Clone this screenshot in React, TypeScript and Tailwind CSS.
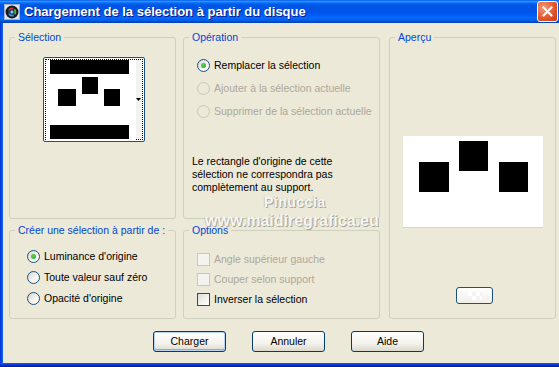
import React from "react";

const font = { fontFamily: '"Liberation Sans", Arial, sans-serif' };

function Radio({ checked = false, disabled = false }: { checked?: boolean; disabled?: boolean }) {
  return (
    <span
      className={
        disabled
          ? "w-[13px] h-[13px] rounded-full border border-[#cac8bb] bg-[#ece9d8] flex items-center justify-center shrink-0"
          : "w-[13px] h-[13px] rounded-full border border-[#1c5180] bg-[linear-gradient(135deg,#d6d4cb,#f7f6f2_60%,#ffffff)] flex items-center justify-center shrink-0"
      }
    >
      {checked && <span className="w-[5px] h-[5px] rounded-full bg-[radial-gradient(circle_at_40%_40%,#61d351,#21a121)]" />}
    </span>
  );
}

function Check({ disabled = false }: { disabled?: boolean }) {
  return (
    <span
      className={
        disabled
          ? "w-[13px] h-[13px] border border-[#cac8bb] bg-[#f4f3ee] shrink-0"
          : "w-[13px] h-[13px] border border-[#1c5180] bg-[linear-gradient(135deg,#dcdcd7,#f4f4f0_60%,#ffffff)] shrink-0"
      }
    />
  );
}

function Group({
  title,
  className,
  children,
}: {
  title: string;
  className: string;
  children?: React.ReactNode;
}) {
  return (
    <fieldset className={`border border-[#d0d0bf] rounded-[3px] m-0 p-0 min-w-0 ${className}`}>
      <legend className="ml-[5px] px-[3px] text-[10.5px] leading-[13px] text-[#0046d5]">{title}</legend>
      {children}
    </fieldset>
  );
}

function Button({ label, isDefault = false }: { label: string; isDefault?: boolean }) {
  return (
    <div
      className={
        isDefault
          ? "w-[73px] h-[21px] rounded-[3px] border border-[#003c74] bg-[linear-gradient(to_bottom,#ffffff,#f3f2ec_60%,#dcd8cc)] shadow-[inset_0_0_0_1px_#b8d2f6,inset_0_-1px_0_1px_#8aa9ee] flex items-center justify-center text-[10.5px] text-black"
          : "w-[73px] h-[21px] rounded-[3px] border border-[#003c74] bg-[linear-gradient(to_bottom,#ffffff,#f3f2ec_60%,#dcd8cc)] flex items-center justify-center text-[10.5px] text-black"
      }
    >
      {label}
    </div>
  );
}

export default function App() {
  return (
    <div className="w-[559px] h-[367px] relative overflow-hidden bg-[#ece9d8] flex flex-col" style={font}>
      {/* Title bar */}
      <div className="h-[23px] shrink-0 flex items-center bg-[linear-gradient(to_bottom,#0058ee_0%,#3593ff_6%,#127dff_10%,#0262ee_16%,#0057e5_22%,#0054e3_30%,#0055eb_56%,#005bf5_66%,#026afe_76%,#0062ef_86%,#0052d6_92%,#0040ab_100%)]">
        <svg width="16" height="16" viewBox="0 0 16 16" className="ml-[4px] mr-[4px] shrink-0">
          <rect x="0.5" y="0.5" width="15" height="15" fill="#dfe6ef" stroke="#9fb2c9" />
          <circle cx="8" cy="8" r="6.5" fill="#1a1a1a" />
          <circle cx="8" cy="8" r="4" fill="#2a3a5a" />
          <path d="M5 6 A4 4 0 0 1 9 4.5" stroke="#d33" strokeWidth="1.6" fill="none" />
          <path d="M10.5 5.5 A4 4 0 0 1 11 10" stroke="#3c3" strokeWidth="1.6" fill="none" />
          <path d="M9.5 11.5 A4 4 0 0 1 5 10" stroke="#39f" strokeWidth="1.6" fill="none" />
          <circle cx="8" cy="8" r="1.5" fill="#7cf" />
        </svg>
        <span className="text-white font-bold text-[13px] leading-[16px] whitespace-nowrap [text-shadow:1px_1px_0_#0a1883]">
          Chargement de la sélection à partir du disque
        </span>
        <div className="ml-auto mr-[1px] w-[21px] h-[21px] rounded-[3px] border border-white bg-[radial-gradient(circle_at_30%_30%,#f09a7c,#e2582f_55%,#c23a14)] flex items-center justify-center">
          <svg width="11" height="11" viewBox="0 0 11 11">
            <path d="M1.5 1.5 L9.5 9.5 M9.5 1.5 L1.5 9.5" stroke="white" strokeWidth="2" strokeLinecap="square" />
          </svg>
        </div>
      </div>

      {/* Body */}
      <div className="flex flex-1 min-h-0">
        <div className="w-[3px] shrink-0 bg-[linear-gradient(to_right,#0831d9,#0a4fe6_60%,#166aee)]" />
        <div className="flex-1 flex flex-col pl-[6px] pt-[8px] text-[10.5px] leading-[13px]">
          <div className="flex">
            {/* Left column */}
            <div className="w-[167px] flex flex-col gap-[5px]">
              <Group title="Sélection" className="h-[188px]">
                <div className="ml-[33px] mt-[13px] w-[102px] h-[85px] rounded-[2px] border border-[#1c5180] bg-white p-[1px]">
                  <div className="w-full h-full border border-dotted border-black flex">
                    <svg width="90" height="81" viewBox="0 0 90 81" className="shrink-0">
                      <rect x="0" y="0" width="90" height="81" fill="#fff" />
                      <rect x="4" y="0" width="79" height="14" fill="#000" />
                      <rect x="36" y="17" width="16" height="17" fill="#000" />
                      <rect x="12" y="29" width="18" height="17" fill="#000" />
                      <rect x="58" y="29" width="16" height="17" fill="#000" />
                      <rect x="4" y="65" width="79" height="14" fill="#000" />
                    </svg>
                    <div className="flex-1 bg-[#f2f2ee] flex items-center justify-end pr-[1px]">
                      <svg width="5" height="3" viewBox="0 0 5 3">
                        <path d="M0 0 H5 L2.5 3 Z" fill="#000" />
                      </svg>
                    </div>
                  </div>
                </div>
              </Group>
              <Group title="Créer une sélection à partir de :" className="h-[95px]">
                <div className="mt-[9px] pl-[17px] flex flex-col">
                  <div className="h-[21px] flex items-center gap-[4px] text-black">
                    <Radio checked />
                    <span>Luminance d'origine</span>
                  </div>
                  <div className="h-[21px] flex items-center gap-[4px] text-black">
                    <Radio />
                    <span>Toute valeur sauf zéro</span>
                  </div>
                  <div className="h-[21px] flex items-center gap-[4px] text-black">
                    <Radio />
                    <span>Opacité d'origine</span>
                  </div>
                </div>
              </Group>
            </div>

            {/* Middle column */}
            <div className="w-[197px] ml-[7px] flex flex-col gap-[5px]">
              <Group title="Opération" className="h-[188px]">
                <div className="mt-[10px] pl-[13px] flex flex-col">
                  <div className="h-[23px] flex items-center gap-[4px] text-black">
                    <Radio checked />
                    <span>Remplacer la sélection</span>
                  </div>
                  <div className="h-[23px] flex items-center gap-[4px] text-[#aca899]">
                    <Radio disabled />
                    <span>Ajouter à la sélection actuelle</span>
                  </div>
                  <div className="h-[23px] flex items-center gap-[4px] text-[#aca899]">
                    <Radio disabled />
                    <span>Supprimer de la sélection actuelle</span>
                  </div>
                </div>
                <p className="mt-[32px] pl-[8px] text-black leading-[13px]">
                  Le rectangle d'origine de cette
                  <br />
                  sélection ne correspondra pas
                  <br />
                  complètement au support.
                </p>
              </Group>
              <Group title="Options" className="h-[95px]">
                <div className="mt-[12px] pl-[13px] flex flex-col">
                  <div className="h-[20px] flex items-center gap-[4px] text-[#aca899]">
                    <Check disabled />
                    <span>Angle supérieur gauche</span>
                  </div>
                  <div className="h-[20px] flex items-center gap-[4px] text-[#aca899]">
                    <Check disabled />
                    <span>Couper selon support</span>
                  </div>
                  <div className="h-[20px] flex items-center gap-[4px] text-black">
                    <Check />
                    <span>Inverser la sélection</span>
                  </div>
                </div>
              </Group>
            </div>

            {/* Right column */}
            <div className="w-[167px] ml-[9px]">
              <Group title="Aperçu" className="h-[288px]">
                <div className="ml-[13px] mt-[92px] w-[140px] h-[91px] shadow-[0_1px_0_#d8d5c6]">
                  <svg width="140" height="91" viewBox="0 0 140 91">
                    <rect x="0" y="0" width="140" height="91" fill="#fff" />
                    <rect x="16" y="26" width="30" height="30" fill="#000" />
                    <rect x="56" y="5" width="29" height="30" fill="#000" />
                    <rect x="96" y="26" width="29" height="30" fill="#000" />
                  </svg>
                </div>
                <div className="ml-[66px] mt-[60px] w-[37px] h-[17px] rounded-[3px] border border-[#1c5180] bg-[linear-gradient(to_bottom,#ffffff,#f1efe7)] flex items-center justify-center">
                  <div className="w-[14px] h-[8px] bg-[repeating-conic-gradient(#f4f4f4_0%_25%,#ffffff_0%_50%)] bg-[length:8px_8px]" />
                </div>
              </Group>
            </div>
          </div>

          {/* Buttons */}
          <div className="mt-[12px] pl-[144px] flex gap-[26px]">
            <Button label="Charger" isDefault />
            <Button label="Annuler" />
            <Button label="Aide" />
          </div>
        </div>
      </div>

      {/* Bottom border */}
      <div className="h-[4px] shrink-0 bg-[linear-gradient(to_bottom,#0a62ee,#0831d9_50%,#001c8e)]" />

      {/* Watermark */}
      <div className="absolute left-[264px] top-[194px] font-bold text-[14px] leading-[16px] tracking-[0.5px] text-[#f7f6f1] [text-shadow:1px_1px_0_#a9a799,-1px_0_0_#c9c7b9] pointer-events-none">
        Pinuccia
      </div>
      <div className="absolute left-[205px] top-[212px] font-bold text-[16px] leading-[18px] text-[#f7f6f1] [text-shadow:1px_1px_0_#a9a799,-1px_0_0_#c9c7b9] pointer-events-none">
        www.maidiregrafica.eu
      </div>
    </div>
  );
}
